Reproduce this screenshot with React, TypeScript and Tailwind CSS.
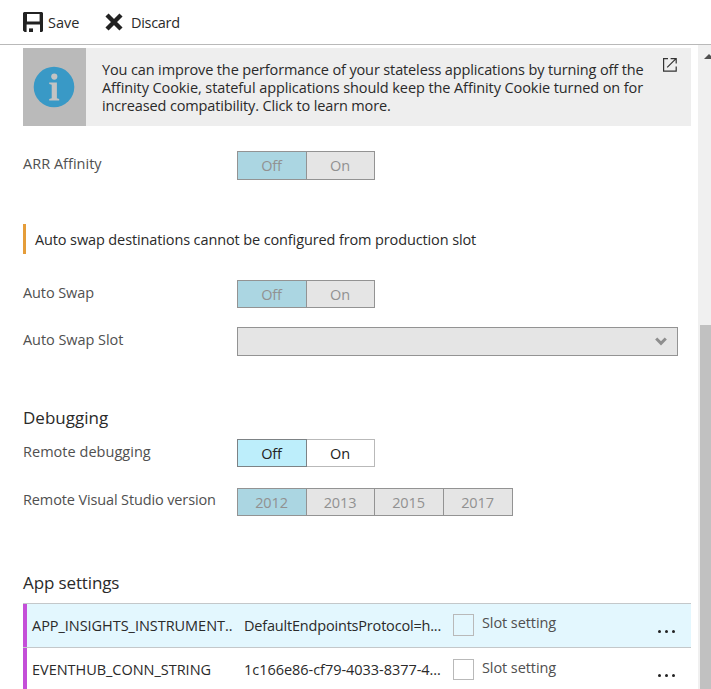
import type { ReactNode } from "react";
import clsx from "clsx";

type Option = { label: string; width: string };

const offOn: Option[] = [
  { label: "Off", width: "w-[70px]" },
  { label: "On", width: "w-[68px]" },
];

const versions: Option[] = [
  { label: "2012", width: "w-[70px]" },
  { label: "2013", width: "w-[68px]" },
  { label: "2015", width: "w-[69px]" },
  { label: "2017", width: "w-[69px]" },
];

const settings = [
  {
    name: "APP_INSIGHTS_INSTRUMENT..",
    value: "DefaultEndpointsProtocol=h...",
    nameTracking: "tracking-[-0.04px]",
    valueTracking: "tracking-[-0.19px]",
    active: true,
  },
  {
    name: "EVENTHUB_CONN_STRING",
    value: "1c166e86-cf79-4033-8377-4...",
    nameTracking: "tracking-[-0.03px]",
    valueTracking: "tracking-[-0.04px]",
    active: false,
  },
];

function SaveIcon() {
  return (
    <svg width="20" height="20" viewBox="0 0 20 20" fill="#222">
      <path
        fillRule="evenodd"
        d="M1 0H19L20 1V19L19 20H17V12.6H3.6V20H1.6L0 18.4V1ZM4 2V9.4H16.6V2Z"
      />
      <path d="M6 16.4H10V20H6Z" />
    </svg>
  );
}

function DiscardIcon() {
  return (
    <svg width="18" height="18" viewBox="0 0 18 18" stroke="#222" strokeWidth="4.4">
      <path d="M2 2L16 16M16 2L2 16" />
    </svg>
  );
}

function InfoIcon() {
  return (
    <svg width="42" height="42" viewBox="0 0 42 42">
      <circle cx="21" cy="21" r="20.3" fill="#3999c6" />
      <circle cx="21.3" cy="10.6" r="3.1" fill="#c3c3c3" />
      <path
        d="M16.2 16.6H23.9V32.2L26.2 33V34.4H16.2V33L18.7 32.2V18.8L16.2 18.1Z"
        fill="#c3c3c3"
      />
    </svg>
  );
}

function OpenIcon() {
  return (
    <svg width="14" height="14" viewBox="0 0 14 14" fill="none" stroke="#333" strokeWidth="1.2">
      <path d="M5 0.6H0.6V13.2H13.2V8.5" />
      <path d="M4.2 9.4L12.8 0.9M7.6 0.6H13.2V5.6" />
    </svg>
  );
}

function Toggle({ options, disabled }: { options: Option[]; disabled?: boolean }) {
  return (
    <div className="flex h-full">
      {options.map((o, i) => (
        <div
          key={o.label}
          className={clsx(
            "flex items-center justify-center border-y border-r pt-px pr-px tracking-[-0.15px]",
            o.width,
            i === 0 && "border-l",
            disabled
              ? i === 0
                ? "border-[#939393] bg-[#abd6e2] text-[#919191]"
                : "border-[#939393] bg-[#e5e5e5] text-[#919191]"
              : i === 0
                ? "border-[#7d8285] bg-[#bdeefb] text-[#222]"
                : "border-[#b9b9b9] bg-white text-[#222]",
          )}
        >
          {o.label}
        </div>
      ))}
    </div>
  );
}

function Field({
  label,
  tracking,
  className,
  children,
}: {
  label: string;
  tracking: string;
  className: string;
  children: ReactNode;
}) {
  return (
    <div className={clsx("flex shrink-0", className)}>
      <div className={clsx("w-[214px] shrink-0 text-[#505050]", tracking)}>{label}</div>
      {children}
    </div>
  );
}

export default function App() {
  return (
    <div className="flex h-[689px] w-[711px] flex-col overflow-hidden bg-white font-['Open_Sans','Noto_Sans',sans-serif] text-[14.5px] leading-5 whitespace-nowrap text-[#2a2a2a]">
      <header className="flex h-[45px] shrink-0 items-center border-b border-[#b9b9b9] pl-[23px]">
        <SaveIcon />
        <span className="ml-[5px] w-[51px] pt-0.5">Save</span>
        <div className="ml-[6px]">
          <DiscardIcon />
        </div>
        <span className="ml-2 pt-0.5 tracking-[-0.3px]">Discard</span>
      </header>

      <div className="flex min-h-0 flex-1">
        <main className="flex w-[691px] shrink-0 flex-col overflow-hidden pt-[3px] pl-[23px]">
          <section className="flex h-[78px] shrink-0 bg-[#eeeeee]">
            <div className="flex w-[63px] items-center justify-center bg-[#bababa] pr-[2px] pb-px">
              <InfoIcon />
            </div>
            <div className="flex-1 pt-[13px] pl-4 leading-[18px]">
              <p className="tracking-[-0.13px]">
                You can improve the performance of your stateless applications by turning off the
              </p>
              <p className="tracking-[-0.09px]">
                Affinity Cookie, stateful applications should keep the Affinity Cookie turned on for
              </p>
              <p className="tracking-[-0.14px]">increased compatibility. Click to learn more.</p>
            </div>
            <div className="pt-[10px] pr-[14px]">
              <OpenIcon />
            </div>
          </section>

          <Field label="ARR Affinity" tracking="pt-[3px] tracking-[0.02px]" className="mt-[25px] h-[29px]">
            <Toggle options={offOn} disabled />
          </Field>

          <p className="mt-11 flex h-[30px] shrink-0 items-center border-l-[3px] border-[#e59d39] pt-[2px] pl-[9px] tracking-[-0.12px]">
            Auto swap destinations cannot be configured from production slot
          </p>

          <Field label="Auto Swap" tracking="pt-[3px] tracking-[-0.1px]" className="mt-[26px] h-7">
            <Toggle options={offOn} disabled />
          </Field>
          <Field
            label="Auto Swap Slot"
            tracking="pt-[3px] tracking-[-0.05px]"
            className="mt-[19px] h-[29px]"
          >
            <div className="flex w-[441px] items-center justify-end border border-[#939393] bg-[#e5e5e5] pr-[10px]">
              <svg width="12" height="9" viewBox="0 0 12 9" fill="none" stroke="#8e8e8e" strokeWidth="3">
                <path d="M1.2 1.5L6 6.3L10.8 1.5" />
              </svg>
            </div>
          </Field>

          <h2 className="mt-[50px] h-6 shrink-0 text-[17px] leading-6">Debugging</h2>
          <Field
            label="Remote debugging"
            tracking="pt-[3px] tracking-[0.03px]"
            className="mt-[9px] h-7"
          >
            <Toggle options={offOn} />
          </Field>
          <Field
            label="Remote Visual Studio version"
            tracking="pt-[2px] tracking-[-0.13px]"
            className="mt-[21px] h-7"
          >
            <Toggle options={versions} disabled />
          </Field>

          <h2 className="mt-[55px] h-8 shrink-0 text-[17px] leading-6 tracking-[-0.12px]">
            App settings
          </h2>
          {settings.map((s) => (
            <div
              key={s.name}
              className={clsx("flex h-11 shrink-0 border-t border-[#c4c8ca]", s.active && "bg-[#e3f7fe]")}
            >
              <div className="w-1 bg-[#c44fd8]" />
              <div className={clsx("w-[213px] pt-3 pl-[5px]", s.nameTracking)}>{s.name}</div>
              <div className={clsx("w-[213px] pt-3 pl-[4px]", s.valueTracking)}>{s.value}</div>
              <div className={clsx("flex w-[204px]", s.active ? "pt-[10px]" : "pt-[11px]")}>
                <div
                  className={clsx("w-[21px] border border-[#b9b9b9]", s.active ? "h-[22px]" : "h-[21px]")}
                />
                <span className="-mt-px ml-2 tracking-[-0.08px] text-[#505050]">Slot setting</span>
              </div>
              <div className="flex h-full items-start gap-1 pt-[26px] pl-px">
                <i className="size-[3px] rounded-full bg-[#222]" />
                <i className="size-[3px] rounded-full bg-[#222]" />
                <i className="size-[3px] rounded-full bg-[#222]" />
              </div>
            </div>
          ))}
        </main>

        <aside className="ml-[7px] flex flex-1 flex-col bg-[#f0f0f0]">
          <svg className="mt-[9px] ml-[6px] shrink-0" width="7" height="5" viewBox="0 0 7 5">
            <path d="M0 5L5 0L10 5Z" fill="#505050" />
          </svg>
          <div className="mt-[266px] ml-[2px] flex-1 bg-[#c1c1c1]" />
        </aside>
      </div>
    </div>
  );
}
